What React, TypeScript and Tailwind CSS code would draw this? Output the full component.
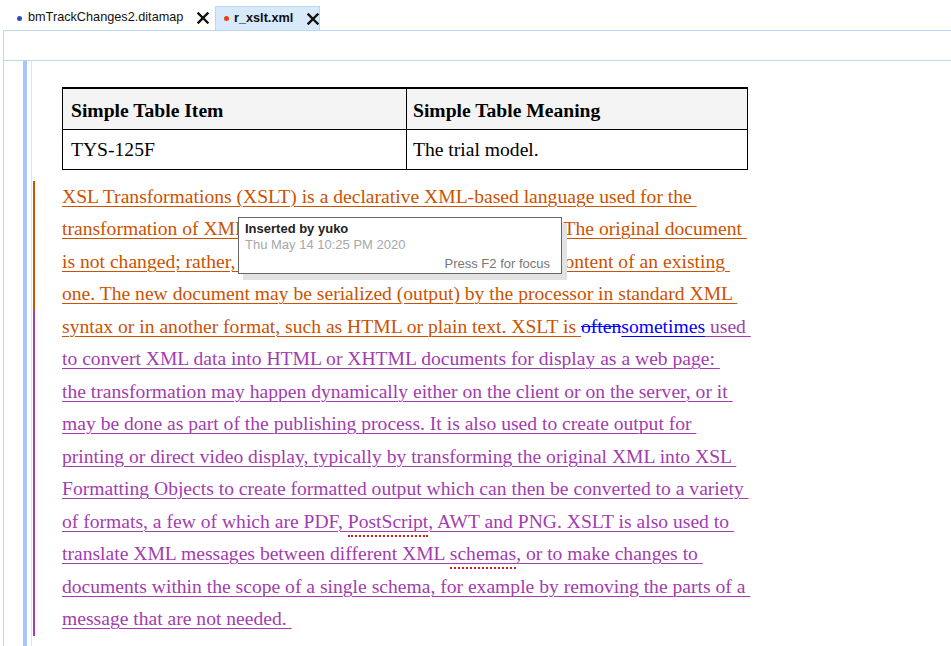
import React from "react";

const ORANGE = "text-[#cc5200] decoration-[#cc5200]";
const PURPLE = "text-[#a23cb0] decoration-[#a23cb0]";

function CloseIcon() {
  return (
    <svg width="12" height="12" viewBox="0 0 12 12" className="shrink-0">
      <path d="M1.5 1.5 L10.5 10.5 M10.5 1.5 L1.5 10.5" stroke="#111" strokeWidth="2.4" strokeLinecap="square" />
    </svg>
  );
}

function Tabs() {
  return (
    <div className="flex h-[30px] items-end pl-[17px] font-['Liberation_Sans',Arial,sans-serif] text-[12.7px] text-[#111]">
      <div className="flex h-[24px] w-[198px] shrink-0 items-center gap-[6px]">
        <span className="h-[5px] w-[5px] shrink-0 rounded-full bg-[#2b4fc0]" />
        <span>bmTrackChanges2.ditamap</span>
        <span className="ml-[8px]">
          <CloseIcon />
        </span>
      </div>
      <div className="flex h-[24px] w-[105px] shrink-0 items-center border border-b-0 border-[#bcd7f0] bg-[#d7e9fb] pl-[8px]">
        <span className="h-[5px] w-[5px] shrink-0 rounded-full bg-[#e8400f]" />
        <span className="ml-[5px] font-bold">r_xslt.xml</span>
        <span className="ml-[14px]">
          <CloseIcon />
        </span>
      </div>
    </div>
  );
}

function Line({ children }: { children: React.ReactNode }) {
  return <div className="whitespace-pre">{children}</div>;
}

function U({ c, children }: { c: string; children: React.ReactNode }) {
  return <span className={`underline decoration-1 underline-offset-[3px] ${c}`}>{children}</span>;
}

function Spell({ children }: { children: React.ReactNode }) {
  return (
    <span className="relative">
      {children}
      <span className="absolute left-0 right-0 top-[24px] h-[2px] border-b-2 border-dotted border-[#e0191f]" />
    </span>
  );
}

export default function App() {
  return (
    <div className="h-[646px] w-[951px] overflow-hidden bg-white">
      <Tabs />
      <div className="ml-[3px] flex h-[616px] flex-col border-l border-t border-[#bcd7f0]">
        <div className="h-[30px] shrink-0 border-b border-[#bcd7f0]" />
        <div className="flex flex-1 pl-[19px]">
          <div className="w-[4px] bg-[#a4c7f7]" />
          <div className="ml-[4px] w-px bg-[#d6e6f7]" />
          <div className="flex-1 pt-[26px] font-['Liberation_Serif','Times_New_Roman',serif] text-[19.6px] text-black">
            <table className="ml-[30px] w-[686px] border-collapse border border-t-2 border-black">
              <thead>
                <tr className="h-[41px] bg-[#f4f4f4]">
                  <th className="w-[344px] border border-black px-[8px] pt-[3px] text-left font-bold">Simple Table Item</th>
                  <th className="border border-black px-[6px] pt-[3px] text-left font-bold">Simple Table Meaning</th>
                </tr>
              </thead>
              <tbody>
                <tr className="h-[40px]">
                  <td className="border border-black px-[8px] pt-[2px]">TYS-125F</td>
                  <td className="border border-black px-[6px] pt-[2px]">The trial model.</td>
                </tr>
              </tbody>
            </table>

            <div className="relative mt-[11px] flex">
              <div className="ml-[1px] flex w-[2px] flex-col">
                <div className="h-[130px] bg-[#cc5200]" />
                <div className="h-[325px] bg-[#a23cb0]" />
              </div>
              <div className="ml-[27px] leading-[32.5px]">
                <Line><U c={ORANGE}>XSL Transformations (XSLT) is a declarative XML-based language used for the </U></Line>
                <Line><U c={ORANGE}>transformation of XML documents into other XML documents. The original document </U></Line>
                <Line><U c={ORANGE}>is not changed; rather, a new document is created based on the content of an existing </U></Line>
                <Line><U c={ORANGE}>one. The new document may be serialized (output) by the processor in standard XML </U></Line>
                <Line>
                  <U c={ORANGE}>syntax or in another format, such as HTML or plain text. XSLT is </U>
                  <span className="text-[#0000ff] line-through decoration-[#0000ff]">often</span>
                  <U c="text-[#0000ff] decoration-[#0000ff]">sometimes</U>
                  <U c={PURPLE}> used </U>
                </Line>
                <Line><U c={PURPLE}>to convert XML data into HTML or XHTML documents for display as a web page: </U></Line>
                <Line><U c={PURPLE}>the transformation may happen dynamically either on the client or on the server, or it </U></Line>
                <Line><U c={PURPLE}>may be done as part of the publishing process. It is also used to create output for </U></Line>
                <Line><U c={PURPLE}>printing or direct video display, typically by transforming the original XML into XSL </U></Line>
                <Line><U c={PURPLE}>Formatting Objects to create formatted output which can then be converted to a variety </U></Line>
                <Line>
                  <U c={PURPLE}>of formats, a few of which are PDF, <Spell>PostScript</Spell>, AWT and PNG. XSLT is also used to </U>
                </Line>
                <Line>
                  <U c={PURPLE}>translate XML messages between different XML <Spell>schemas</Spell>, or to make changes to </U>
                </Line>
                <Line><U c={PURPLE}>documents within the scope of a single schema, for example by removing the parts of a </U></Line>
                <Line><U c={PURPLE}>message that are not needed. </U></Line>
              </div>

              <div className="absolute left-[206px] top-[36px] h-[57px] w-[324px] border border-[#666] bg-white px-[6px] pt-[3px] font-['Liberation_Sans',Arial,sans-serif] text-[13px] leading-[16px] shadow-[5px_6px_0_#e2e2e2]">
                <div className="font-bold text-[#222]">Inserted by yuko</div>
                <div className="text-[#a8a8a8]">Thu May 14 10:25 PM 2020</div>
                <div className="mt-[3px] pr-[5px] text-right text-[#777]">Press F2 for focus</div>
              </div>
            </div>
          </div>
        </div>
      </div>
    </div>
  );
}
